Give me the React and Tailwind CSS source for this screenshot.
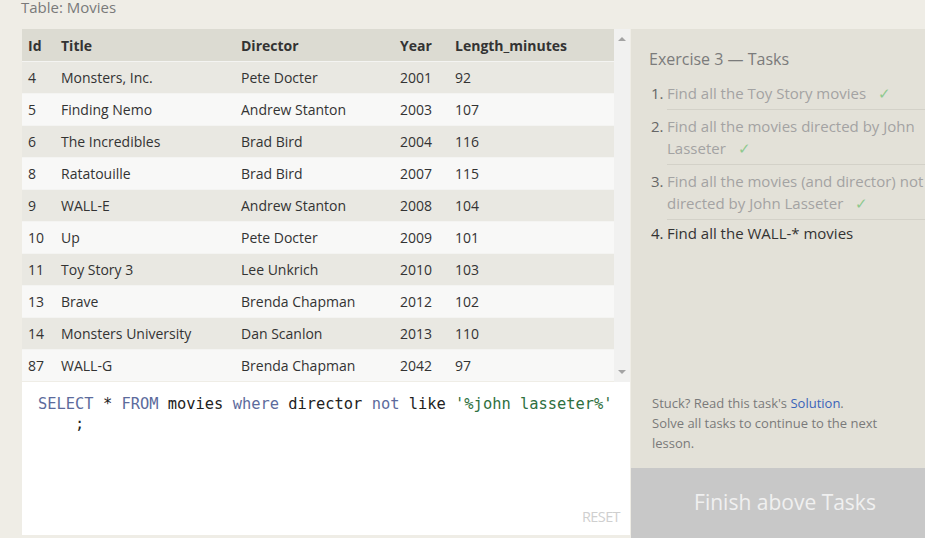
import React from 'react'

const ROWS = [
    [4, 'Monsters, Inc.', 'Pete Docter', 2001, 92],
    [5, 'Finding Nemo', 'Andrew Stanton', 2003, 107],
    [6, 'The Incredibles', 'Brad Bird', 2004, 116],
    [8, 'Ratatouille', 'Brad Bird', 2007, 115],
    [9, 'WALL-E', 'Andrew Stanton', 2008, 104],
    [10, 'Up', 'Pete Docter', 2009, 101],
    [11, 'Toy Story 3', 'Lee Unkrich', 2010, 103],
    [13, 'Brave', 'Brenda Chapman', 2012, 102],
    [14, 'Monsters University', 'Dan Scanlon', 2013, 110],
    [87, 'WALL-G', 'Brenda Chapman', 2042, 97],
];

const TASKS = [
    { n: 1, lines: ['Find all the Toy Story movies'], done: true },
    { n: 2, lines: ['Find all the movies directed by John', 'Lasseter'], done: true },
    { n: 3, lines: ['Find all the movies (and director) not', 'directed by John Lasseter'], done: true },
    { n: 4, lines: ['Find all the WALL-* movies'], done: false },
];

const COLS = "grid grid-cols-[33px_180px_159px_55px_1fr]";

function Check() {
    return <span className="ml-[12px] text-[#8fc98f]">✓</span>
}

export default function App() {
    return (
        <div className="w-[925px] h-[538px] overflow-hidden bg-[#efede6] font-['Open_Sans',sans-serif] pl-[22px]">
            <div className="h-[29px] flex items-start">
                <div className="-ml-[1px] -mt-[3px] text-[15px] leading-[20px] text-[#7a7a7a]">Table: Movies</div>
            </div>

            <div className="flex h-[509px]">
                {/* left: table + editor */}
                <div className="w-[608px] shrink-0 flex flex-col">
                    <div className="flex h-[353px]">
                        <div className="w-[592px] text-[14px] text-[#333]">
                            <div className={`${COLS} h-[32px] items-center bg-[#dcdbd2] font-bold pt-[1px]`}>
                                <div className="px-[6px]">Id</div>
                                <div className="px-[6px]">Title</div>
                                <div className="px-[6px]">Director</div>
                                <div className="px-[6px]">Year</div>
                                <div className="px-[6px]">Length_minutes</div>
                            </div>
                            {ROWS.map((r, i) => (
                                <div key={r[0]} className={`${COLS} h-[32px] items-center border-t border-[#f4f4f2] ${i % 2 === 0 ? 'bg-[#e9e8e2]' : 'bg-[#f8f8f7]'}`}>
                                    {r.map((c, j) => (
                                        <div key={j} className="px-[6px] whitespace-nowrap">{c}</div>
                                    ))}
                                </div>
                            ))}
                        </div>
                        <div className="w-[16px] bg-[#f1f1f0] flex flex-col justify-between items-center py-[6px]">
                            <div className="w-0 h-0 border-l-[4px] border-r-[4px] border-b-[4px] border-l-transparent border-r-transparent border-b-[#a3a3a3] mt-[2px]" />
                            <div className="w-0 h-0 border-l-[4px] border-r-[4px] border-t-[4px] border-l-transparent border-r-transparent border-t-[#a3a3a3] mb-[2px]" />
                        </div>
                    </div>

                    {/* editor */}
                    <div className="h-[153px] bg-white flex flex-col pl-[16px] pt-[12px] pr-[10px] pb-[10px] font-['DejaVu_Sans_Mono',monospace] text-[15.4px] leading-[20px] text-[#222]">
                        <div className="whitespace-pre">
                            <span className="text-[#5c6b9c]">SELECT</span> * <span className="text-[#5c6b9c]">FROM</span> movies <span className="text-[#5c6b9c]">where</span> director <span className="text-[#5c6b9c]">not</span> like <span className="text-[#2e7040]">'%john lasseter%'</span>
                        </div>
                        <div className="whitespace-pre pl-[37px]">;</div>
                        <div className="mt-auto self-end font-['Open_Sans',sans-serif] text-[14.5px] leading-[16px] text-[#cfcfcf] tracking-[-0.6px]">RESET</div>
                    </div>
                    <div className="flex-1" />
                </div>

                {/* right: tasks */}
                <div className="ml-[1px] w-[308px] shrink-0 bg-[#e3e1d8] flex flex-col">
                    <div className="flex-1 pl-[18px] pt-[19px]">
                        <div className="text-[16px] leading-[22px] text-[#7b7b7b]">Exercise 3 — Tasks</div>
                        <div className="mt-[7px] text-[15px] leading-[22px]">
                            {TASKS.map((t, i) => {
                                const last = i === TASKS.length - 1;
                                return (
                                    <div key={t.n} className="flex">
                                        <div className={`w-[18px] pl-[2px] ${last ? 'pt-[2px]' : 'pt-[5px]'} ${t.done ? 'text-[#666]' : 'text-[#333]'}`}>{t.n}.</div>
                                        <div className={`flex-1 ${last ? 'py-[2px]' : 'py-[5px] border-b border-[#d3d1c8]'} ${t.done ? 'text-[#a3a3a3]' : 'text-[#333]'}`}>
                                            {t.lines.map((l, k) => (
                                                <div key={k} className="whitespace-nowrap">
                                                    {l}{t.done && k === t.lines.length - 1 && <Check />}
                                                </div>
                                            ))}
                                        </div>
                                    </div>
                                );
                            })}
                        </div>
                    </div>
                    <div className="pl-[21px] pb-[15px] text-[13px] leading-[20px] text-[#7a7a7a]">
                        <div>Stuck? Read this task's <span className="text-[#3a63b8]">Solution</span>.</div>
                        <div>Solve all tasks to continue to the next</div>
                        <div>lesson.</div>
                    </div>
                    <div className="h-[70px] bg-[#c8c8c8] flex items-center justify-center text-[21px] text-[#f0f0f0]">
                        Finish above Tasks
                    </div>
                </div>
            </div>
        </div>
    )
}
